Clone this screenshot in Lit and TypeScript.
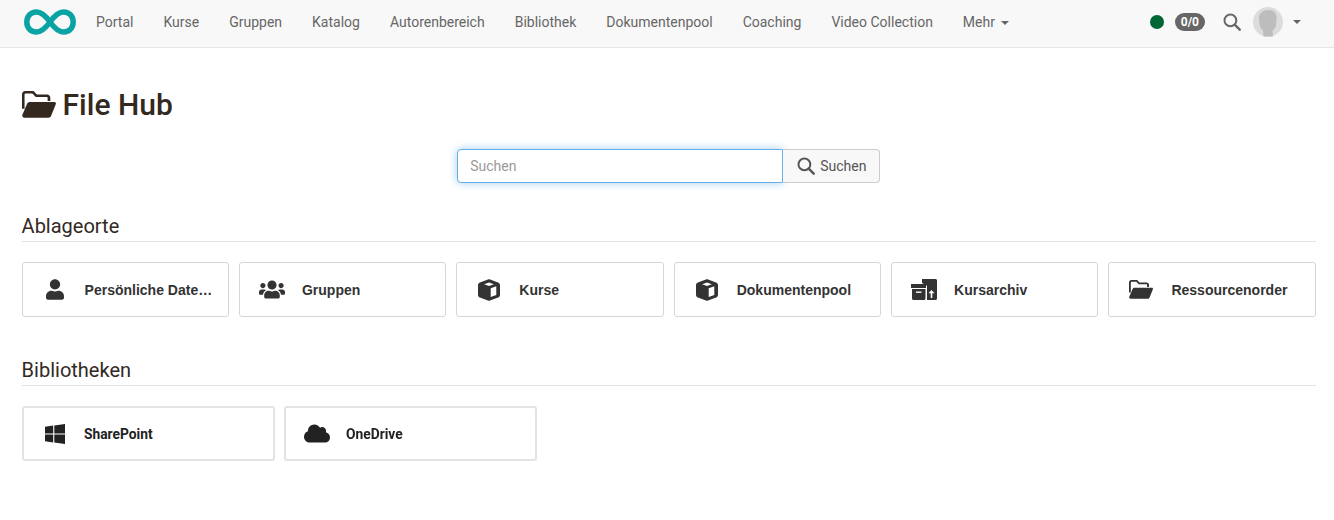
import { LitElement, html, css, svg } from 'lit';
import { customElement } from 'lit/decorators.js';

const NAV = ['Portal', 'Kurse', 'Gruppen', 'Katalog', 'Autorenbereich', 'Bibliothek', 'Dokumentenpool', 'Coaching', 'Video Collection'];

const searchIcon = html`<svg width="18" height="18" viewBox="0 0 18 18" fill="none" stroke="currentColor" stroke-width="2"><circle cx="7.4" cy="7.4" r="5.9"/><path d="M11.7 11.7l5 5" stroke-width="2.4" stroke-linecap="round"/></svg>`;

// open folder, shared by the title and the last card
const folderPaths = svg`<path fill-rule="evenodd" d="M2.3 0h5.8l2.4 2.4h7.2c1.3 0 2.3 1 2.3 2.3V7h-1.9V4.900c0-.4-.3-.7-.7-.7H9.700L7.300 1.800H2.600c-.4 0-.8.300-.8.800v9.900H0V2.300C0 1 1 0 2.300 0z"/><path d="M5.400 7.700h17.500c.8 0 1.300.8 1 1.500l-3.300 8.200c-.3.8-1.100 1.400-2 1.400H1.700C.6 18.800-.2 17.700.3 16.700l3.300-7.800c.3-.7 1-1.200 1.800-1.200z"/>`;

const cubeIcon = html`<svg width="22" height="22" viewBox="0 0 22 22" fill="currentColor"><path fill-rule="evenodd" d="M11.400.3l8.700 3.100c1.100.4 1.900 1.400 1.900 2.600v10c0 1.200-.8 2.200-1.900 2.600l-8.700 3.100c-.3.100-.6.100-.8 0l-8.700-3.100C.8 18.200 0 17.200 0 16V6c0-1.200.8-2.200 1.900-2.600L10.600.3c.3-.1.500-.1.800 0zM11 3.600L6.100 5.300 11 7.100l4.900-1.800L11 3.600zM12.700 9.300v8.700l5.600-2V7.300l-5.600 2z"/></svg>`;

const ICONS = {
  user: html`<svg width="18" height="21" viewBox="0 0 448 512" fill="currentColor"><path d="M224 256c70.700 0 128-57.300 128-128S294.700 0 224 0 96 57.300 96 128s57.300 128 128 128zm89.600 32h-16.700c-22.200 10.200-46.900 16-72.900 16s-50.600-5.800-72.900-16h-16.700C60.200 288 0 348.200 0 422.400V464c0 26.500 21.500 48 48 48h352c26.500 0 48-21.500 48-48v-41.600c0-74.200-60.200-134.400-134.400-134.400z"/></svg>`,
  users: html`<svg width="26" height="21" viewBox="0 0 640 512" fill="currentColor"><path d="M96 224c35.300 0 64-28.700 64-64s-28.700-64-64-64-64 28.700-64 64 28.700 64 64 64zm448 0c35.300 0 64-28.700 64-64s-28.700-64-64-64-64 28.700-64 64 28.700 64 64 64zm32 32h-64c-17.600 0-33.500 7.100-45.100 18.600 40.300 22.100 68.900 62 75.100 109.400h66c17.700 0 32-14.300 32-32v-32c0-35.300-28.700-64-64-64zm-256 0c61.900 0 112-50.100 112-112S381.900 32 320 32 208 82.100 208 144s50.100 112 112 112zm76.800 32h-8.300c-20.800 10-43.900 16-68.500 16s-47.600-6-68.500-16h-8.300C179.600 288 128 339.600 128 403.200V432c0 26.500 21.500 48 48 48h288c26.500 0 48-21.500 48-48v-28.800c0-63.600-51.600-115.200-115.200-115.200zm-223.700-13.400C161.500 263.100 145.600 256 128 256H64c-35.300 0-64 28.700-64 64v32c0 17.700 14.300 32 32 32h65.900c6.300-47.400 34.900-87.300 75.200-109.400z"/></svg>`,
  cube: cubeIcon,
  archive: html`<svg width="26" height="21" viewBox="0 0 26 21" fill="currentColor"><path d="M11 0h13.500c.8 0 1.500.7 1.500 1.500v18c0 .8-.7 1.500-1.500 1.500H16V7.500c0-.5-.3-1-.7-1.300L11 4V0z"/><path d="M0 5h15v4H0z"/><path d="M1 10h13.500v9.500c0 .8-.7 1.500-1.500 1.500H2.500c-.8 0-1.500-.7-1.500-1.500V10z"/><path d="M5 12.500h5.500v1.400H5z" fill="#fff"/><path d="M20.500 11l3 3.300h-2.200V19h-1.600v-4.700h-2.200z" fill="#fff"/></svg>`,
  folder: html`<svg width="24" height="19" viewBox="0 0 24 19" fill="currentColor">${folderPaths}</svg>`,
  windows: html`<svg width="20" height="20" viewBox="0 0 20 20" fill="currentColor"><path d="M0 2.800l8.200-1.200v7.800H0zM9.300 1.400L20 0v9.400H9.300zM0 10.600h8.200v7.800L0 17.200zM9.300 10.600H20V20L9.300 18.600z"/></svg>`,
  cloud: html`<svg width="27" height="21" viewBox="0 0 640 512" fill="currentColor"><path d="M537.600 226.600c4.100-10.700 6.400-22.400 6.400-34.600 0-53-43-96-96-96-19.700 0-38.100 6-53.300 16.200C367 64.200 315.300 32 256 32c-88.400 0-160 71.600-160 160 0 2.700.1 5.400.2 8.100C40.200 219.800 0 273.200 0 336c0 79.500 64.500 144 144 144h368c70.700 0 128-57.300 128-128 0-61.900-44-113.600-102.400-125.400z"/></svg>`,
};

const STORAGE = [
  { label: 'Persönliche Dateien', icon: ICONS.user },
  { label: 'Gruppen', icon: ICONS.users },
  { label: 'Kurse', icon: ICONS.cube },
  { label: 'Dokumentenpool', icon: ICONS.cube },
  { label: 'Kursarchiv', icon: ICONS.archive },
  { label: 'Ressourcenorder', icon: ICONS.folder },
];

const LIBRARIES = [
  { label: 'SharePoint', icon: ICONS.windows },
  { label: 'OneDrive', icon: ICONS.cloud },
];

@customElement('app-root')
export class AppRoot extends LitElement {
  static override styles = css`
    :host {
      display: block;
      font-family: Roboto, "Liberation Sans", sans-serif;
      color: #33291f;
      background: #fff;
    }
    .topbar {
      display: flex;
      align-items: center;
      box-sizing: border-box;
      height: 48px;
      padding: 0 33px 4px 24px;
      background: #f8f8f8;
      border-bottom: 1px solid #e7e7e7;
    }
    .logo {
      display: block;
      margin-right: 5px;
    }
    .topbar a {
      padding: 0 15px;
      font-size: 14px;
      color: #666;
      white-space: nowrap;
    }
    .caret {
      display: inline-block;
      margin-left: 6px;
      vertical-align: 2px;
      border-top: 4px solid #666;
      border-left: 4px solid transparent;
      border-right: 4px solid transparent;
    }
    .user-caret {
      margin-left: 0;
    }
    .status {
      display: flex;
      align-items: center;
      margin-left: auto;
      color: #666;
    }
    .dot {
      width: 14px;
      height: 14px;
      border-radius: 50%;
      background: #006633;
      margin-right: 11px;
    }
    .badge {
      padding: 0 6px;
      height: 18px;
      line-height: 18px;
      border-radius: 9px;
      background: #666;
      color: #fff;
      font-size: 12px;
      font-weight: 700;
      margin-right: 18px;
    }
    .find {
      display: block;
      margin-right: 12px;
    }
    .avatar {
      display: block;
      margin-right: 10px;
    }
    main {
      padding: 40px 18.2px 0 21.6px;
    }
    h1 {
      display: flex;
      align-items: center;
      gap: 7px;
      margin: 0;
      height: 34px;
      font-size: 30px;
      font-weight: 500;
      line-height: 34px;
    }
    h1 svg {
      margin-top: -2px;
    }
    .search {
      display: flex;
      justify-content: center;
      margin-top: 27px;
    }
    .search input {
      box-sizing: border-box;
      width: 326px;
      height: 34px;
      padding: 0 12px;
      border: 1px solid #66afe9;
      border-radius: 4px 0 0 4px;
      outline: none;
      box-shadow: 0 0 8px rgba(102, 175, 233, 0.6);
      font: 14px Roboto, sans-serif;
    }
    .search input::placeholder {
      color: #999;
    }
    .search button {
      display: flex;
      align-items: center;
      gap: 5px;
      box-sizing: border-box;
      width: 97px;
      height: 34px;
      padding: 0 0 0 14px;
      border: 1px solid #ccc;
      border-left: 0;
      border-radius: 0 4px 4px 0;
      background: #f8f8f8;
      color: #555;
      font: 14px Roboto, sans-serif;
    }
    h2 {
      margin: 0 0 20px;
      padding-bottom: 1px;
      border-bottom: 1px solid #e2e2e2;
      font-size: 20px;
      font-weight: 400;
      line-height: 28px;
      color: #33291f;
    }
    .storage {
      margin-top: 29px;
    }
    .libraries {
      margin-top: 39px;
    }
    .grid {
      display: grid;
      grid-template-columns: repeat(6, minmax(0, 1fr));
      gap: 10px;
    }
    .card {
      display: flex;
      align-items: center;
      box-sizing: border-box;
      height: 55px;
      border: 1px solid #d6d6d6;
      border-radius: 3px;
      background: #fff;
      color: #333;
    }
    .icon {
      display: flex;
      justify-content: center;
      flex: none;
      width: 26px;
      margin: 0 17px 0 19px;
    }
    .label {
      font-family: "Liberation Sans", Arial, sans-serif;
      font-size: 14px;
      font-weight: 700;
      white-space: nowrap;
      overflow: hidden;
      text-overflow: ellipsis;
      padding-right: 15px;
    }
    .libs {
      display: flex;
      gap: 9px;
      padding-left: 0.4px;
      filter: blur(0.3px);
    }
    .libs .card {
      width: 253px;
      border: 2px solid #e3e3e3;
      color: #222;
    }
    .libs .icon {
      margin: 0 16px 0 18px;
    }
    .libs .label {
      font-family: Roboto, sans-serif;
      font-size: 13.8px;
    }
  `;

  override render() {
    return html`
      <nav class="topbar">
        <svg class="logo" width="52" height="26" viewBox="0 0 52 26" fill="none" stroke="#0aa3a3" stroke-width="5.5">
          <path d="M26 13C21 6 17 3 12.500 3 6.500 3 2.800 7.500 2.800 13s3.700 10 9.700 10C17 23 21 20 26 13s9-10 13.500-10c6 0 9.700 4.500 9.700 10s-3.700 10-9.700 10C35 23 31 20 26 13z"/>
        </svg>
        ${NAV.map(n => html`<a>${n}</a>`)}
        <a>Mehr<span class="caret"></span></a>
        <div class="status">
          <span class="dot"></span>
          <span class="badge">0/0</span>
          <svg class="find" width="18" height="18" viewBox="0 0 18 18" fill="none" stroke="currentColor" stroke-width="2"><circle cx="7.4" cy="7.4" r="5.9"/><path d="M11.7 11.7l5 5" stroke-width="2.4" stroke-linecap="round"/></svg>
          <svg class="avatar" width="30" height="30" viewBox="0 0 30 30">
            <circle cx="15" cy="15" r="15" fill="#dcdcdc"/>
            <path d="M6 11c0-5 4-8 10-8 4.500 0 8 3 7.500 9-.3 3-.3 6-1 8-.5 2-2 3-3 3.500l.5 6H10.500l-.5-6.500c-1.500-.5-2.500-2-3-4-.7-2.500-1-5.500-1-8z" fill="#bdbdbd"/>
          </svg>
          <span class="caret user-caret"></span>
        </div>
      </nav>
      <main>
        <h1>
          <svg width="34" height="27" viewBox="0 0 24 19" fill="currentColor">${folderPaths}</svg>
          File Hub
        </h1>
        <div class="search">
          <input placeholder="Suchen" />
          <button>${searchIcon}Suchen</button>
        </div>
        <section class="storage">
          <h2>Ablageorte</h2>
          <div class="grid">
            ${STORAGE.map(s => html`<div class="card"><span class="icon">${s.icon}</span><span class="label">${s.label}</span></div>`)}
          </div>
        </section>
        <section class="libraries">
          <h2>Bibliotheken</h2>
          <div class="libs">
            ${LIBRARIES.map(s => html`<div class="card"><span class="icon">${s.icon}</span><span class="label">${s.label}</span></div>`)}
          </div>
        </section>
      </main>
    `;
  }
}
